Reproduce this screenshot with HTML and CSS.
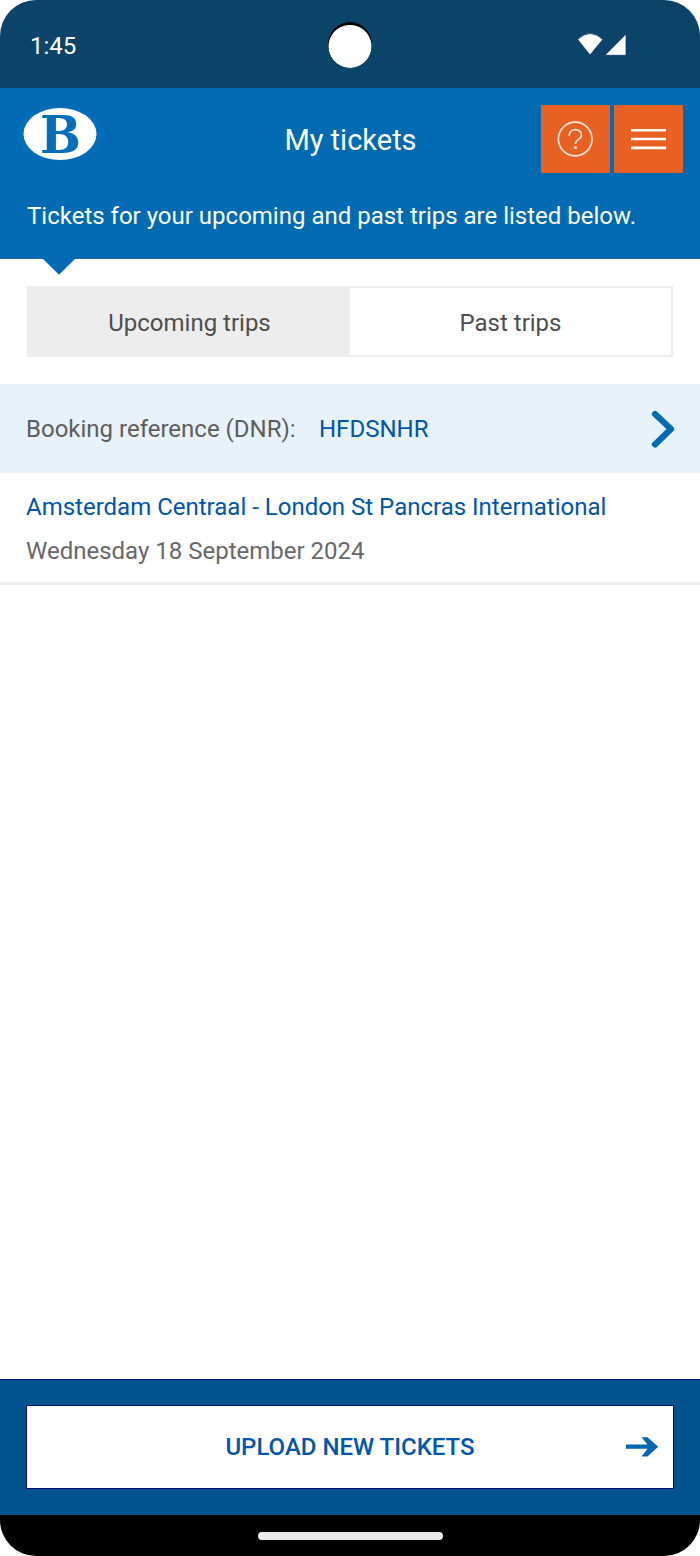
FILE: index.html
```html
<!DOCTYPE html>
<html lang="en">
<head>
<meta charset="utf-8">
<meta name="viewport" content="width=device-width, initial-scale=1">
<title>My tickets</title>
<link rel="stylesheet" href="styles.css">
</head>
<body>
<div class="phone">
  <div class="status-bar">
    <span class="clock">1:45</span>
    <span class="camera"></span>
    <svg class="signals" width="50" height="24" viewBox="0 0 50 24">
      <path d="M.6 6.4Q13 -5.2 25.8 6.4L13 22Z" fill="#fff" stroke="#06286a" stroke-width=".7"/>
      <path d="M28 22.3L49 1V22.3Z" fill="#fff" stroke="#06286a" stroke-width=".7"/>
    </svg>
  </div>
  <header class="header">
    <div class="toolbar">
      <svg class="logo" width="88" height="56" viewBox="0 0 88 56">
        <ellipse cx="44" cy="28" rx="43.5" ry="27.5" fill="#006fbb"/>
        <ellipse cx="44" cy="28" rx="36.5" ry="26" fill="#fff"/>
        <text class="logo-letter" x="24" y="47.3" textLength="41" lengthAdjust="spacingAndGlyphs">B</text>
      </svg>
      <h1 class="title">My tickets</h1>
      <div class="actions">
        <button class="action" aria-label="Help">
          <svg width="68" height="68" viewBox="0 0 68 68" fill="none" stroke="#ffe6da">
            <circle cx="34.2" cy="34" r="16.8" stroke-width="1.7"/>
            <path d="M28.2 30.8C28.2 22.5 40.5 22.8 40.5 30.2C40.5 34.8 34.4 34 34.4 39" stroke-width="1.7"/>
            <circle cx="34.4" cy="42.4" r="1.5" fill="#ffe6da" stroke="none"/>
          </svg>
        </button>
        <button class="action" aria-label="Menu">
          <svg width="68" height="68" viewBox="0 0 68 68" stroke="#fff" stroke-width="2.6">
            <path d="M17 25.2H52M17 34H52M17 42.9H52"/>
          </svg>
        </button>
      </div>
    </div>
    <p class="intro">Tickets for your upcoming and past trips are listed below.</p>
    <svg class="pointer" width="34" height="17" viewBox="0 0 34 17"><path d="M0 0H34L17 16.7Z" fill="#006ab3"/></svg>
  </header>
  <main class="content">
    <div class="tabs">
      <button class="tab tab-active"><span class="tab-upcoming">Upcoming trips</span></button>
      <button class="tab"><span class="tab-past">Past trips</span></button>
    </div>
    <section class="booking">
      <div class="reference">
        <span class="label">Booking reference (DNR):</span>
        <span class="code">HFDSNHR</span>
        <svg class="chevron" width="24" height="40" viewBox="0 0 24 40" fill="none" stroke="#006ab3" stroke-width="6.2" stroke-linecap="round" stroke-linejoin="round"><path d="M4 5L20 20L4 35.4"/></svg>
      </div>
      <div class="trip">
        <div class="route">Amsterdam Centraal - London St Pancras International</div>
        <div class="date">Wednesday 18 September 2024</div>
      </div>
    </section>
  </main>
  <footer class="footer">
    <button class="upload"><span class="upload-label">UPLOAD NEW TICKETS</span>
      <svg class="arrow" width="34" height="22" viewBox="0 0 34 22" fill="#0066b3"><path d="M1 8.6H22.5L16.5 1.2H22.5L33.2 10.7L22.5 20.4H16.5L22.5 12.8H1Z"/></svg>
    </button>
  </footer>
  <div class="nav-bar"><span class="handle"></span></div>
</div>
</body>
</html>
```
FILE: styles.css
```css
* { box-sizing: border-box; }
body { margin: 0; background: #fff; font-family: Roboto, sans-serif; font-size: 24px; }
button { font: inherit; border: 0; padding: 0; margin: 0; }
.phone { width: 700px; height: 1556px; display: flex; flex-direction: column; overflow: hidden; border-radius: 36px; background: #fff; }
.status-bar { height: 88px; flex: none; background: #0c4469; display: grid; grid-template-columns: 328px 44px 1fr; align-items: center; }
.clock { color: #fff; padding-left: 30px; line-height: 28px; margin-top: 3px; }
.camera { width: 44px; height: 46px; margin-top: 1px; border-radius: 50%; background: radial-gradient(circle at 22px 24.5px, #fff 21px, #000 22px); }
.signals { margin-left: 205px; margin-top: 1px; }
.header { height: 171px; flex: none; position: relative; background: #006ab3; border-bottom: 1px solid #2a69ad; color: #fff; padding-top: 17px; }
.toolbar { height: 69px; display: grid; grid-template-columns: 200px 300px 200px; }
.logo { margin: 1px 0 0 16px; }
.logo-letter { font: bold 53px "DejaVu Serif", serif; fill: #006fbb; }
.title { margin: 1px 0 0 1px; font-size: 29px; line-height: 69px; font-weight: 400; text-align: center; }
.actions { display: flex; gap: 4px; padding-left: 41px; }
.action { width: 69px; height: 68px; background: #e96122; display: block; }
.action svg { display: block; }
.intro { margin: 28px 0 0 27px; line-height: 28px; white-space: nowrap; }
.pointer { position: absolute; left: 42px; top: 170px; }
.content { flex: 1; }
.tabs { margin: 27px 27px 0; height: 71px; border: 2px solid #ededed; display: grid; grid-template-columns: 321px 1fr; }
.tab { background: #fff; color: #4e4e4e; padding-top: 2px; }
.tab-active { background: #ededed; }
.booking { margin-top: 27px; }
.reference { height: 89px; background: #e7f2fa; display: flex; align-items: center; padding: 1px 25px 0 26px; }
.label { width: 293px; color: #5d5d5d; white-space: nowrap; }
.code, .route { color: #0055ac; }
.chevron { margin-left: auto; }
.trip { height: 112px; border-bottom: 3px solid #eee; padding: 20px 26px 0; line-height: 29px; white-space: nowrap; }
.date { color: #686868; margin-top: 15px; }
.footer { height: 136px; flex: none; background: #00548e; border-top: 1px solid #000b77; padding: 25px 26px; }
.upload { width: 100%; height: 84px; border: 1px solid #000b77; background: #fff; color: #0057ad; display: grid; grid-template-columns: 1fr 34px 14px; align-items: center; padding-left: 48px; font-weight: 500; }
.nav-bar { height: 41px; flex: none; background: #000; display: flex; justify-content: center; align-items: center; }
.handle { width: 185px; height: 8px; border-radius: 4px; background: #ebebeb; }
```
